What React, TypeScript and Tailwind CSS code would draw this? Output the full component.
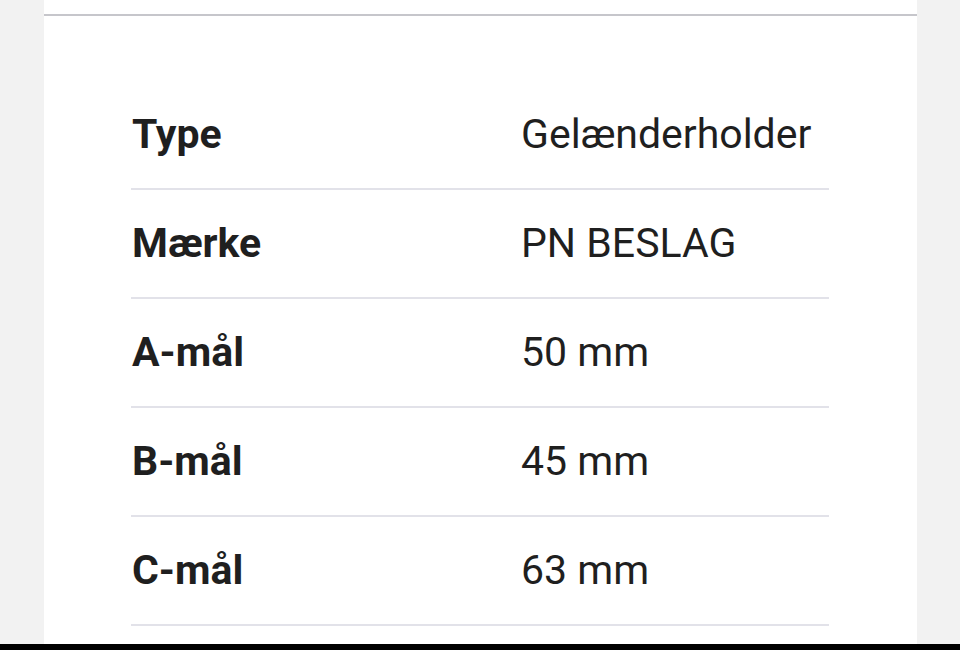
const rows = [
  { label: 'Type', value: 'Gelænderholder' },
  { label: 'Mærke', value: 'PN BESLAG' },
  { label: 'A-mål', value: '50 mm' },
  { label: 'B-mål', value: '45 mm' },
  { label: 'C-mål', value: '63 mm' },
];

export default function App() {
  return (
    <div className="h-[650px] w-[960px] overflow-hidden bg-[#f2f2f2] flex flex-col font-['Roboto',sans-serif] text-[#1f1f1f]">
      <div className="flex-1 ml-[44px] w-[873px] bg-white flex flex-col">
        <div className="h-[14px]" />
        <div className="h-[2px] bg-[#c6c6cb]" />
        <div className="pt-[65px] pl-[87px] w-[785px]">
          {rows.map((r) => (
            <div
              key={r.label}
              className="h-[109px] flex items-center border-b-2 border-[#e2e2e9] leading-none"
            >
              <div className="w-[389px] pl-[1px] text-[41px] font-bold">{r.label}</div>
              <div className="pl-[1px] text-[41px]">{r.value}</div>
            </div>
          ))}
        </div>
      </div>
      <div className="h-[6px] bg-black" />
    </div>
  );
}
